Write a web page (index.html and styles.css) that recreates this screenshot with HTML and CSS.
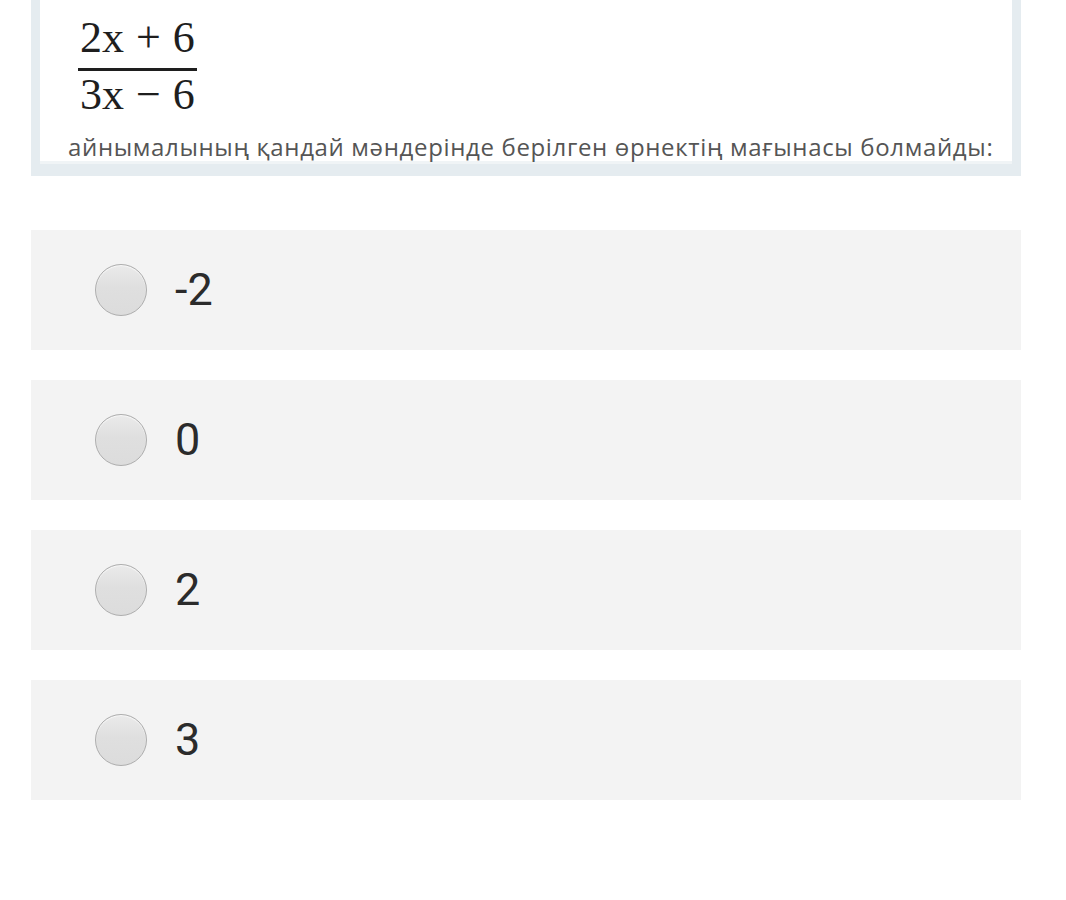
FILE: index.html
```html
<!DOCTYPE html>
<html lang="kk">
<head>
<meta charset="utf-8">
<title>Question</title>
<link rel="stylesheet" href="styles.css">
</head>
<body>
<div class="page">
  <div class="question">
    <div class="q-inner">
      <div class="fraction">
        <span class="num">2x + 6</span>
        <span class="den">3x − 6</span>
      </div>
      <p class="q-text">айнымалының қандай мәндерінде берілген өрнектің мағынасы болмайды:</p>
    </div>
  </div>
  <div class="options">
    <label class="option"><span class="radio"></span><span class="opt-text">-2</span></label>
    <label class="option"><span class="radio"></span><span class="opt-text">0</span></label>
    <label class="option"><span class="radio"></span><span class="opt-text">2</span></label>
    <label class="option"><span class="radio"></span><span class="opt-text">3</span></label>
  </div>
</div>
</body>
</html>
```

FILE: styles.css
```css
html, body {
  margin: 0;
  padding: 0;
  background: #ffffff;
}

.page {
  width: 990px;
  margin-left: 31px;
}

.question {
  background: #e5ecf0;
  padding: 0 9px 12px 9px;
}

.q-inner {
  background: #ffffff;
  border-bottom: 3px solid #f0f4f6;
  padding: 14px 0 0 0;
}

.fraction {
  display: inline-flex;
  flex-direction: column;
  align-items: center;
  margin-left: 38px;
  font-family: "Liberation Serif", "DejaVu Serif", serif;
  font-size: 44px;
  line-height: 48px;
  word-spacing: 1px;
  color: #1e1e1e;
}

.num {
  display: block;
  padding: 0 2px 6px 2px;
  border-bottom: 3px solid #1e1e1e;
}

.den {
  display: block;
  padding: 0 2px;
}

.q-text {
  margin: 14px 0 0 28px;
  font-family: "Open Sans", "Noto Sans", sans-serif;
  font-size: 24px;
  line-height: 28px;
  letter-spacing: 0.65px;
  color: #555555;
}

.options {
  display: flex;
  flex-direction: column;
  gap: 30px;
  margin-top: 54px;
}

.option {
  display: flex;
  align-items: center;
  height: 120px;
  background: #f3f3f3;
  padding-left: 64px;
}

.radio {
  flex: none;
  width: 50px;
  height: 50px;
  border-radius: 50%;
  border: 1px solid #adadad;
  background: linear-gradient(#eaeaea 0%, #dfdfdf 45%, #dcdcdc 100%);
  box-shadow: inset 0 1px 1px rgba(255,255,255,0.7);
}

.opt-text {
  margin-left: 28px;
  font-family: Roboto, "Noto Sans", sans-serif;
  font-size: 45px;
  line-height: 52px;
  color: #2b2b2b;
}
```
